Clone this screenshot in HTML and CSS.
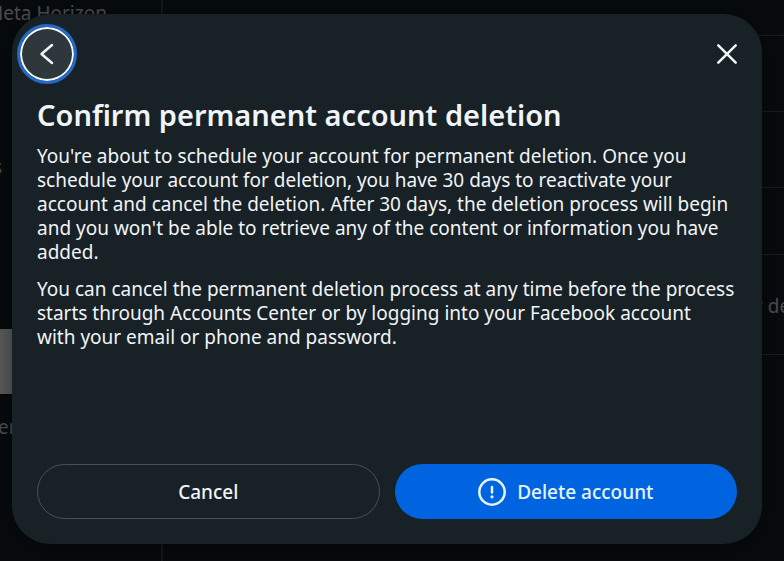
FILE: index.html
```
<!DOCTYPE html>
<html lang="en">
<head>
<meta charset="utf-8">
<meta name="viewport" content="width=device-width, initial-scale=1">
<title>Confirm permanent account deletion</title>
<link rel="stylesheet" href="styles.css">
</head>
<body>
<div class="page" aria-hidden="true">
  <div class="sidebar">
    <p class="side-brand">Meta Horizon</p>
    <p class="side-tail">s</p>
    <div class="side-current"></div>
    <p class="side-item">en</p>
  </div>
  <div class="settings">
    <div class="row row-first"></div>
    <div class="row row-tall"></div>
    <div class="row row-tall"></div>
    <div class="row"></div>
    <div class="row row-label">r de</div>
  </div>
</div>
<div class="backdrop">
  <section class="dialog" role="dialog" aria-modal="true" aria-labelledby="title">
    <header class="toolbar">
      <button class="round back" type="button" aria-label="Back">
        <svg width="24" height="24" viewBox="0 0 24 24"><path d="M17 3 6.500 12 17 21"/></svg>
      </button>
      <button class="round" type="button" aria-label="Close">
        <svg width="24" height="24" viewBox="0 0 24 24"><path d="M3.300 3.300 20.700 20.700M20.700 3.300 3.300 20.700"/></svg>
      </button>
    </header>
    <div class="content">
      <h1 id="title">Confirm permanent account deletion</h1>
      <p>You're about to schedule your account for permanent deletion. Once you<br>schedule your account for deletion, you have 30 days to reactivate your<br>account and cancel the deletion. After 30 days, the deletion process will begin<br>and you won't be able to retrieve any of the content or information you have<br>added.</p>
      <p>You can cancel the permanent deletion process at any time before the process<br>starts through Accounts Center or by logging into your Facebook account<br>with your email or phone and password.</p>
    </div>
    <footer class="actions">
      <button class="action cancel" type="button">Cancel</button>
      <button class="action delete" type="button">
        <svg width="28" height="28" viewBox="0 0 28 28" aria-hidden="true"><circle cx="14" cy="14" r="12.700"/><path d="M14 9V14.500"/><circle class="dot" cx="14" cy="18.800" r="1.600"/></svg>
        Delete account
      </button>
    </footer>
  </section>
</div>
</body>
</html>
```
FILE: styles.css
```
* { box-sizing: border-box; }
body {
  margin: 0;
  background: #070b0d;
  color: #f1f4f7;
  font-family: "Noto Sans", "Open Sans", sans-serif;
  font-size: 19px;
  overflow: hidden;
}
p, h1 { margin: 0; }

/* Dimmed settings page */
.page {
  display: flex;
  height: 100vh;
  overflow: hidden;
  color: #4b4e50;
}
.sidebar {
  flex: 0 0 163px;
  border-right: 2px solid #15191b;
  line-height: 26px;
  white-space: nowrap;
  overflow: hidden;
}
.side-brand { margin-left: -14px; }
.side-tail { margin: 128px 0 0 -7px; }
.side-current { height: 65px; margin-top: 149px; background: #585959; }
.side-item { margin: 20px 0 0 -2px; }
.settings { flex: 1; }
.row {
  height: 67px;
  border-bottom: 1px solid #1a1e20;
}
.row-first { height: 36px; }
.row-tall { height: 76px; }
.row-label {
  height: 100px;
  padding-left: 592px;
  line-height: 102px;
  white-space: nowrap;
  overflow: hidden;
}

/* Dialog */
.backdrop {
  position: absolute;
  inset: 0;
  display: flex;
  padding: 14px 22px 17px 12px;
}
.dialog {
  flex: 1;
  display: flex;
  flex-direction: column;
  padding: 10px 25px 25px;
  border-radius: 38px;
  background: #172126;
  box-shadow: 0 4px 20px rgba(0, 0, 0, 0.4);
}
.toolbar {
  display: flex;
  justify-content: space-between;
  margin: 0 -20px;
}
button {
  display: flex;
  align-items: center;
  justify-content: center;
  margin: 0;
  padding: 0;
  border: 0;
  background: none;
  color: inherit;
  font: inherit;
  cursor: pointer;
}
svg {
  fill: none;
  stroke: currentColor;
  stroke-width: 2.5;
  stroke-linecap: round;
  stroke-linejoin: round;
}
.round { width: 60px; height: 60px; border-radius: 50%; }
.back {
  border: 3px solid #2468c8;
  background: #2d373c;
  box-shadow: inset 0 0 0 2px #f8fdff;
}
.content { flex: 1; }
.content h1 {
  margin-top: 11px;
  font-size: 29px;
  font-weight: 600;
  line-height: 40px;
  white-space: nowrap;
}
.content p {
  margin-top: 9px;
  line-height: 24px;
  white-space: nowrap;
}
.content p + p { margin-top: 13px; }
.actions {
  display: grid;
  grid-template-columns: 1fr 1fr;
  gap: 15px;
}
.action {
  height: 55px;
  border-radius: 28px;
  font-weight: 500;
}
.cancel { border: 1px solid #465158; }
.delete { gap: 11px; background: #0064e0; color: #e5f5ff; }
.dot { fill: currentColor; stroke: none; }
```
